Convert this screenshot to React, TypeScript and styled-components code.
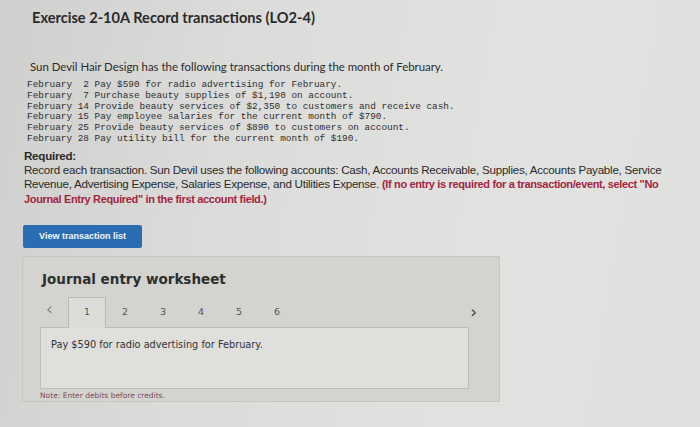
import React from "react";
import styled, { createGlobalStyle } from "styled-components";

const Global = createGlobalStyle`
  html, body { margin: 0; padding: 0; }
  body {
    width: 700px; height: 427px; overflow: hidden;
    background: linear-gradient(100deg, #cfcfcd 0%, #dbdbd9 30%, #e2e2e0 70%, #e0e0de 100%);
    font-family: "Liberation Sans", Arial, sans-serif;
    color: #262626;
  }
`;

const Page = styled.div`
  padding: 9px 0 0 24px;
  width: 676px;
  height: 418px;
  overflow: hidden;
`;

const Title = styled.h1`
  margin: 0 0 0 8px;
  font-family: Lato, "Noto Sans", sans-serif;
  font-weight: 700;
  font-size: 14.6px;
  line-height: 18px;
  color: #2a2a2a;
`;

const Intro = styled.p`
  margin: 33px 0 0 6px;
  font-family: Lato, "Noto Sans", sans-serif;
  font-size: 11.4px;
  line-height: 14px;
  color: #2c2c2c;
`;

const TxList = styled.pre`
  margin: 6px 0 0 3px;
  font-family: "Liberation Mono", "Courier New", monospace;
  font-size: 9.4px;
  line-height: 10.8px;
  color: #2e2e2e;
`;

const Required = styled.div`
  margin-top: 4px;
  font-family: "Liberation Sans", Arial, sans-serif;
  font-size: 11.6px;
  line-height: 14.3px;
  color: #2a2a2a;
  letter-spacing: -0.25px;
`;

const Bold = styled.div`
  font-weight: 700;
`;

const Red = styled.span`
  color: #a3263e;
  font-weight: 700;
  font-size: 11px;
  letter-spacing: -0.35px;
`;

const Button = styled.button`
  display: block;
  margin: 19px 0 0 -1px;
  width: 119px;
  height: 23px;
  border: none;
  border-radius: 2px;
  background: #2b6db3;
  color: #f2f5fa;
  font-family: "Liberation Sans", Arial, sans-serif;
  font-weight: 700;
  font-size: 9px;
  padding: 0;
`;

const Panel = styled.section`
  margin: 8px 0 0 -2px;
  width: 478px;
  height: 146px;
  background: #d3d3d0;
  border: 1px solid #c6c6c3;
  box-sizing: border-box;
  padding: 13px 0 0 17px;
  overflow: hidden;
`;

const PanelTitle = styled.h2`
  margin: 0 0 0 2px;
  font-family: "DejaVu Sans", Verdana, sans-serif;
  font-weight: 700;
  font-size: 13.5px;
  line-height: 18px;
  color: #2e2e2e;
`;

const TabRow = styled.div`
  display: flex;
  align-items: flex-start;
  margin-top: 9px;
  height: 30px;
`;

const Arrow = styled.span<{ $right?: boolean }>`
  font-family: "DejaVu Sans", sans-serif;
  font-size: 17px;
  line-height: 18px;
  color: ${(p) => (p.$right ? "#444" : "#8a8a8a")};
  width: ${(p) => (p.$right ? "auto" : "22px")};
  margin-left: ${(p) => (p.$right ? "auto" : "6px")};
  margin-right: ${(p) => (p.$right ? "22px" : "0")};
  margin-top: ${(p) => (p.$right ? "6px" : "3px")};
`;

const Tab = styled.div<{ $active?: boolean }>`
  width: 38px;
  height: 31px;
  box-sizing: border-box;
  text-align: center;
  padding-top: 8px;
  font-family: "DejaVu Sans", Verdana, sans-serif;
  font-size: 9.5px;
  line-height: 11px;
  color: #555;
  background: ${(p) => (p.$active ? "#dcdcd9" : "transparent")};
  border: 1px solid ${(p) => (p.$active ? "#b9b9b6" : "transparent")};
  border-bottom: none;
  position: relative;
  z-index: 1;
`;

const Content = styled.div`
  width: 429px;
  height: 62px;
  box-sizing: border-box;
  background: #dfdfdc;
  border: 1px solid #bdbdba;
  padding: 11px 0 0 10px;
  font-family: "DejaVu Sans", Verdana, sans-serif;
  font-size: 9.75px;
  line-height: 12px;
  color: #333;
`;

const Note = styled.div`
  margin: 2px 0 0 0;
  font-family: "DejaVu Sans", Verdana, sans-serif;
  font-size: 7.5px;
  line-height: 9px;
  color: #7d4a58;
`;

const tx = [
  "February  2 Pay $590 for radio advertising for February.",
  "February  7 Purchase beauty supplies of $1,190 on account.",
  "February 14 Provide beauty services of $2,350 to customers and receive cash.",
  "February 15 Pay employee salaries for the current month of $790.",
  "February 25 Provide beauty services of $890 to customers on account.",
  "February 28 Pay utility bill for the current month of $190.",
];

export default function App() {
  return (
    <>
      <Global />
      <Page>
        <Title>Exercise 2-10A Record transactions (LO2-4)</Title>
        <Intro>Sun Devil Hair Design has the following transactions during the month of February.</Intro>
        <TxList>{tx.join("\n")}</TxList>
        <Required>
          <Bold>Required:</Bold>
          Record each transaction. Sun Devil uses the following accounts: Cash, Accounts Receivable, Supplies, Accounts Payable, Service
          <br />
          Revenue, Advertising Expense, Salaries Expense, and Utilities Expense.{" "}
          <Red>(If no entry is required for a transaction/event, select "No</Red>
          <br />
          <Red>Journal Entry Required" in the first account field.)</Red>
        </Required>
        <Button>View transaction list</Button>
        <Panel>
          <PanelTitle>Journal entry worksheet</PanelTitle>
          <TabRow>
            <Arrow>‹</Arrow>
            {[1, 2, 3, 4, 5, 6].map((n) => (
              <Tab key={n} $active={n === 1}>{n}</Tab>
            ))}
            <Arrow $right>›</Arrow>
          </TabRow>
          <Content>Pay $590 for radio advertising for February.</Content>
          <Note>Note: Enter debits before credits.</Note>
        </Panel>
      </Page>
    </>
  );
}
